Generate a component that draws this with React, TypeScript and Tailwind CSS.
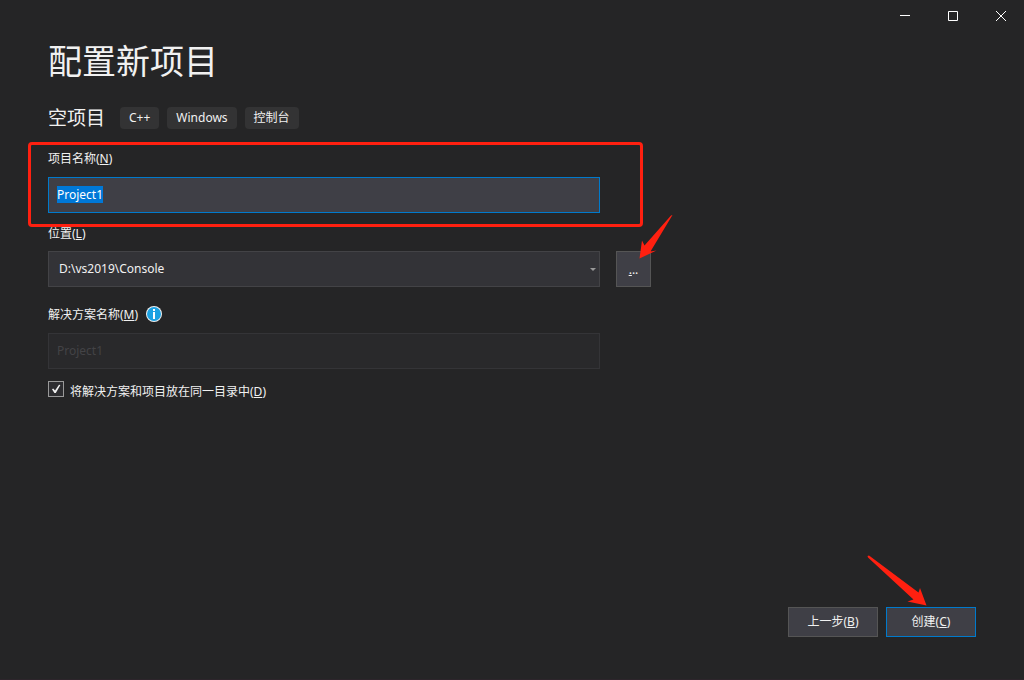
import { useEffect, useRef, useState } from "react";

const tags: string[] = ["C++", "Windows", "控制台"];

const WindowControls: React.FC = () => {
    return <header className="flex h-8 justify-end text-white">
        <button type="button" aria-label="最小化" className="flex w-12 items-center justify-center pl-0.5">
            <svg width="10" height="10" viewBox="0 0 10 10" shapeRendering="crispEdges">
                <path d="M0 4h10v1H0z" fill="currentColor" />
            </svg>
        </button>
        <button type="button" aria-label="最大化" className="flex w-12 items-center justify-center pl-0.5">
            <svg width="10" height="10" viewBox="0 0 10 10" fill="none" stroke="currentColor">
                <path d="M.5.5h9v9h-9z" />
            </svg>
        </button>
        <button type="button" aria-label="关闭" className="flex w-12 items-center justify-center pl-0.5">
            <svg width="10" height="10" viewBox="0 0 10 10" fill="none" stroke="currentColor">
                <path d="M0 0l10 10M10 0L0 10" />
            </svg>
        </button>
    </header>
};

const InfoIcon: React.FC = () => {
    return <svg width="16" height="16" viewBox="0 0 16 16">
        <circle cx="8" cy="8" r="8" fill="#f1f1f1" />
        <circle cx="8" cy="8" r="7" fill="#1ba1e2" />
        <path d="M7 3h2v2H7zM7 6h2v7H7z" fill="#fff" />
    </svg>
};

const App: React.FC = () => {
    const nameRef = useRef<HTMLInputElement>(null);
    const [name, setName] = useState<string>("Project1")
    const [sameFolder, setSameFolder] = useState<boolean>(true)

    useEffect(() => {
        nameRef.current?.focus();
        nameRef.current?.select();
    }, []);

    return <div className="flex min-h-screen flex-col border-b border-[#2d252b] bg-[#252526] font-['Noto_Sans','Noto_Sans_CJK_SC',sans-serif] text-xs leading-[18px] text-[#f1f1f1]">
        <WindowControls />
        <main className="grow px-12 pt-2">
            <h1 className="text-[34px] leading-[42px]">配置新项目</h1>
            <div className="mt-[22px] flex h-7 items-center gap-2">
                <h2 className="mr-[7px] text-[19px] leading-7">空项目</h2>
                {tags.map((tag) => (
                    <span key={tag} className="rounded bg-[#333334] px-[9px] py-0.5">{tag}</span>
                ))}
            </div>

            <form className="mt-[18px] max-w-[552px]">
                <div className="relative">
                    <label htmlFor="name" className="block">项目名称(<u>N</u>)</label>
                    <input
                        id="name"
                        ref={nameRef}
                        value={name}
                        onChange={(e) => setName(e.target.value)}
                        spellCheck={false}
                        className="mt-[9px] block h-9 w-full border border-[#007acc] bg-[#3f3f46] px-2 pb-0.5 caret-transparent outline-none selection:bg-[#0078d7] selection:text-white"
                    />
                    <div className="pointer-events-none absolute -top-2 -right-[43px] -bottom-3.5 -left-5 rounded border-3 border-[#ff2010]" />
                </div>

                <label htmlFor="location" className="mt-3 block">位置(<u>L</u>)</label>
                <div className="mt-2 flex">
                    <div className="relative w-full shrink-0">
                        <select id="location" className="block h-9 w-full appearance-none border border-[#434346] bg-[#333337] px-2.5">
                            <option>D:\vs2019\Console</option>
                        </select>
                        <svg className="pointer-events-none absolute top-[17px] right-1" width="6" height="3" viewBox="0 0 6 3">
                            <path d="M0 0h6L3 3z" fill="#999999" />
                        </svg>
                    </div>
                    <button type="button" aria-label="浏览" className="relative ml-4 h-9 w-[35px] shrink-0 border border-[#555555] bg-[#3f3f46] pt-0.5">
                        <u>.</u>..
                        <svg className="pointer-events-none absolute -top-[38px] left-[21px]" width="36" height="45" viewBox="638 214 36 45">
                            <path d="M672.5 215L671 215.5L644.5 245.5L642 240.5L639.5 258.5L656.5 250.5L650.5 251.5Z" fill="#ff2010" />
                        </svg>
                    </button>
                </div>

                <div className="mt-[17px] flex items-center gap-2">
                    <label htmlFor="solution" className="pt-0.5">解决方案名称(<u>M</u>)</label>
                    <InfoIcon />
                </div>
                <input id="solution" value={name} disabled className="mt-[9px] block h-9 w-full border border-[#343437] bg-[#29292b] px-2 pb-0.5 text-[#434346]" />

                <div className="mt-3 flex items-start gap-1.5">
                    <span className="relative size-4">
                        <input
                            id="same"
                            type="checkbox"
                            checked={sameFolder}
                            onChange={(e) => setSameFolder(e.target.checked)}
                            className="block size-4 appearance-none border border-[#999999] bg-[#2d2d30]"
                        />
                        {sameFolder && (
                            <svg className="pointer-events-none absolute inset-0" width="16" height="16" viewBox="0 0 16 16">
                                <path d="M4 8.2L5.2 7.6L7 9.6L11 3.8L12.4 4L7.8 12H6.4Z" fill="#f1f1f1" />
                            </svg>
                        )}
                    </span>
                    <label htmlFor="same" className="pt-0.5">将解决方案和项目放在同一目录中(<u>D</u>)</label>
                </div>
            </form>
        </main>

        <footer className="flex justify-end gap-2 px-12 pb-[42px]">
            <button type="button" className="h-[30px] w-[90px] border border-[#555555] bg-[#3f3f46]">上一步(<u>B</u>)</button>
            <button type="button" className="relative h-[30px] w-[90px] border border-[#007acc] bg-[#3f3f46]">
                创建(<u>C</u>)
                <svg className="pointer-events-none absolute -top-[53px] -left-5" width="61" height="52" viewBox="867 555 61 52">
                    <path d="M867.5 556L869 555.5L918.5 592.5L920 588L926.5 605.5L907.5 601.5L913.5 599.5L868 557.5Z" fill="#ff2010" />
                </svg>
            </button>
        </footer>
    </div>
};
export default App;
